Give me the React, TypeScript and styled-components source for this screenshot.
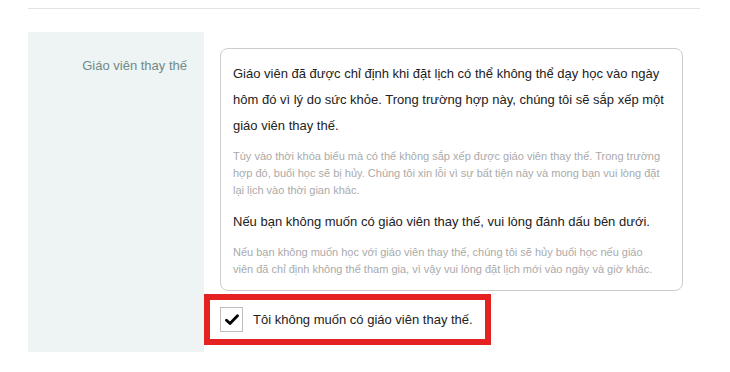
import styled, { createGlobalStyle } from "styled-components";

const GlobalStyle = createGlobalStyle`
  html, body {
    margin: 0;
    padding: 0;
    background: #fff;
  }
  body {
    font-family: "Liberation Sans", Arial, sans-serif;
    color: #333;
  }
`;

export default function App() {
  return (
    <>
      <GlobalStyle />
      <Page>
        <Divider />
        <Row>
          <LabelCell>
            <Label>Giáo viên thay thế</Label>
          </LabelCell>
          <ContentCell>
            <InfoBox>
              <MainText>
                Giáo viên đã được chỉ định khi đặt lịch có thể không thể dạy học vào ngày
                hôm đó vì lý do sức khỏe. Trong trường hợp này, chúng tôi sẽ sắp xếp một
                giáo viên thay thế.
              </MainText>
              <Note>
                Tùy vào thời khóa biểu mà có thể không sắp xếp được giáo viên thay thế. Trong
                trường hợp đó, buổi học sẽ bị hủy. Chúng tôi xin lỗi vì sự bất tiện này và
                mong bạn vui lòng đặt lại lịch vào thời gian khác.
              </Note>
              <MainText>
                Nếu bạn không muốn có giáo viên thay thế, vui lòng đánh dấu bên dưới.
              </MainText>
              <Note>
                Nếu bạn không muốn học với giáo viên thay thế, chúng tôi sẽ hủy buổi học nếu
                giáo
                <br />
                viên đã chỉ định không thể tham gia, vì vậy vui lòng đặt lịch mới vào ngày và
                giờ khác.
              </Note>
            </InfoBox>
            <CheckRow>
              <CheckBox>
                <svg width="14" height="12" viewBox="0 0 14 12">
                  <path
                    d="M1.5 6.2 L5 9.5 L12.5 1.8"
                    fill="none"
                    stroke="#000"
                    strokeWidth="2.8"
                    strokeLinecap="round"
                    strokeLinejoin="round"
                  />
                </svg>
              </CheckBox>
              <CheckLabel>Tôi không muốn có giáo viên thay thế.</CheckLabel>
            </CheckRow>
          </ContentCell>
        </Row>
      </Page>
    </>
  );
}

const Page = styled.div`
  width: 672px;
  margin-left: 28px;
  padding-top: 8px;
`;

const Divider = styled.div`
  height: 1px;
  background: #e3e3e3;
`;

const Row = styled.div`
  display: flex;
  margin-top: 23px;
  height: 320px;
`;

const LabelCell = styled.div`
  width: 176px;
  flex-shrink: 0;
  background: #eef3f3;
  padding: 24px 17px 0 0;
  box-sizing: border-box;
  text-align: right;
`;

const Label = styled.span`
  font-size: 13px;
  color: #6f8a88;
`;

const ContentCell = styled.div`
  flex: 1;
  padding: 16px 17px 0 16px;
`;

const InfoBox = styled.div`
  border: 1px solid #cccccc;
  border-radius: 8px;
  padding: 12px 12px 12px 12px;
  height: 243px;
  box-sizing: border-box;
`;

const MainText = styled.p`
  margin: 0;
  font-size: 13px;
  line-height: 26px;
  color: #222;
`;

const Note = styled.p`
  margin: 9px 0 10px;
  font-size: 11px;
  line-height: 17px;
  color: #aaaaaa;
`;

const CheckRow = styled.label`
  display: flex;
  align-items: center;
  gap: 10px;
  width: 287px;
  height: 51px;
  box-sizing: border-box;
  margin: 3px 0 0 -16px;
  padding-left: 10px;
  border: 6px solid #e42222;
`;

const CheckBox = styled.span`
  width: 23px;
  height: 25px;
  flex-shrink: 0;
  box-sizing: border-box;
  border: 1px solid #bdbdbd;
  display: flex;
  align-items: center;
  justify-content: center;
`;

const CheckLabel = styled.span`
  font-size: 13px;
  color: #222;
  white-space: nowrap;
`;
